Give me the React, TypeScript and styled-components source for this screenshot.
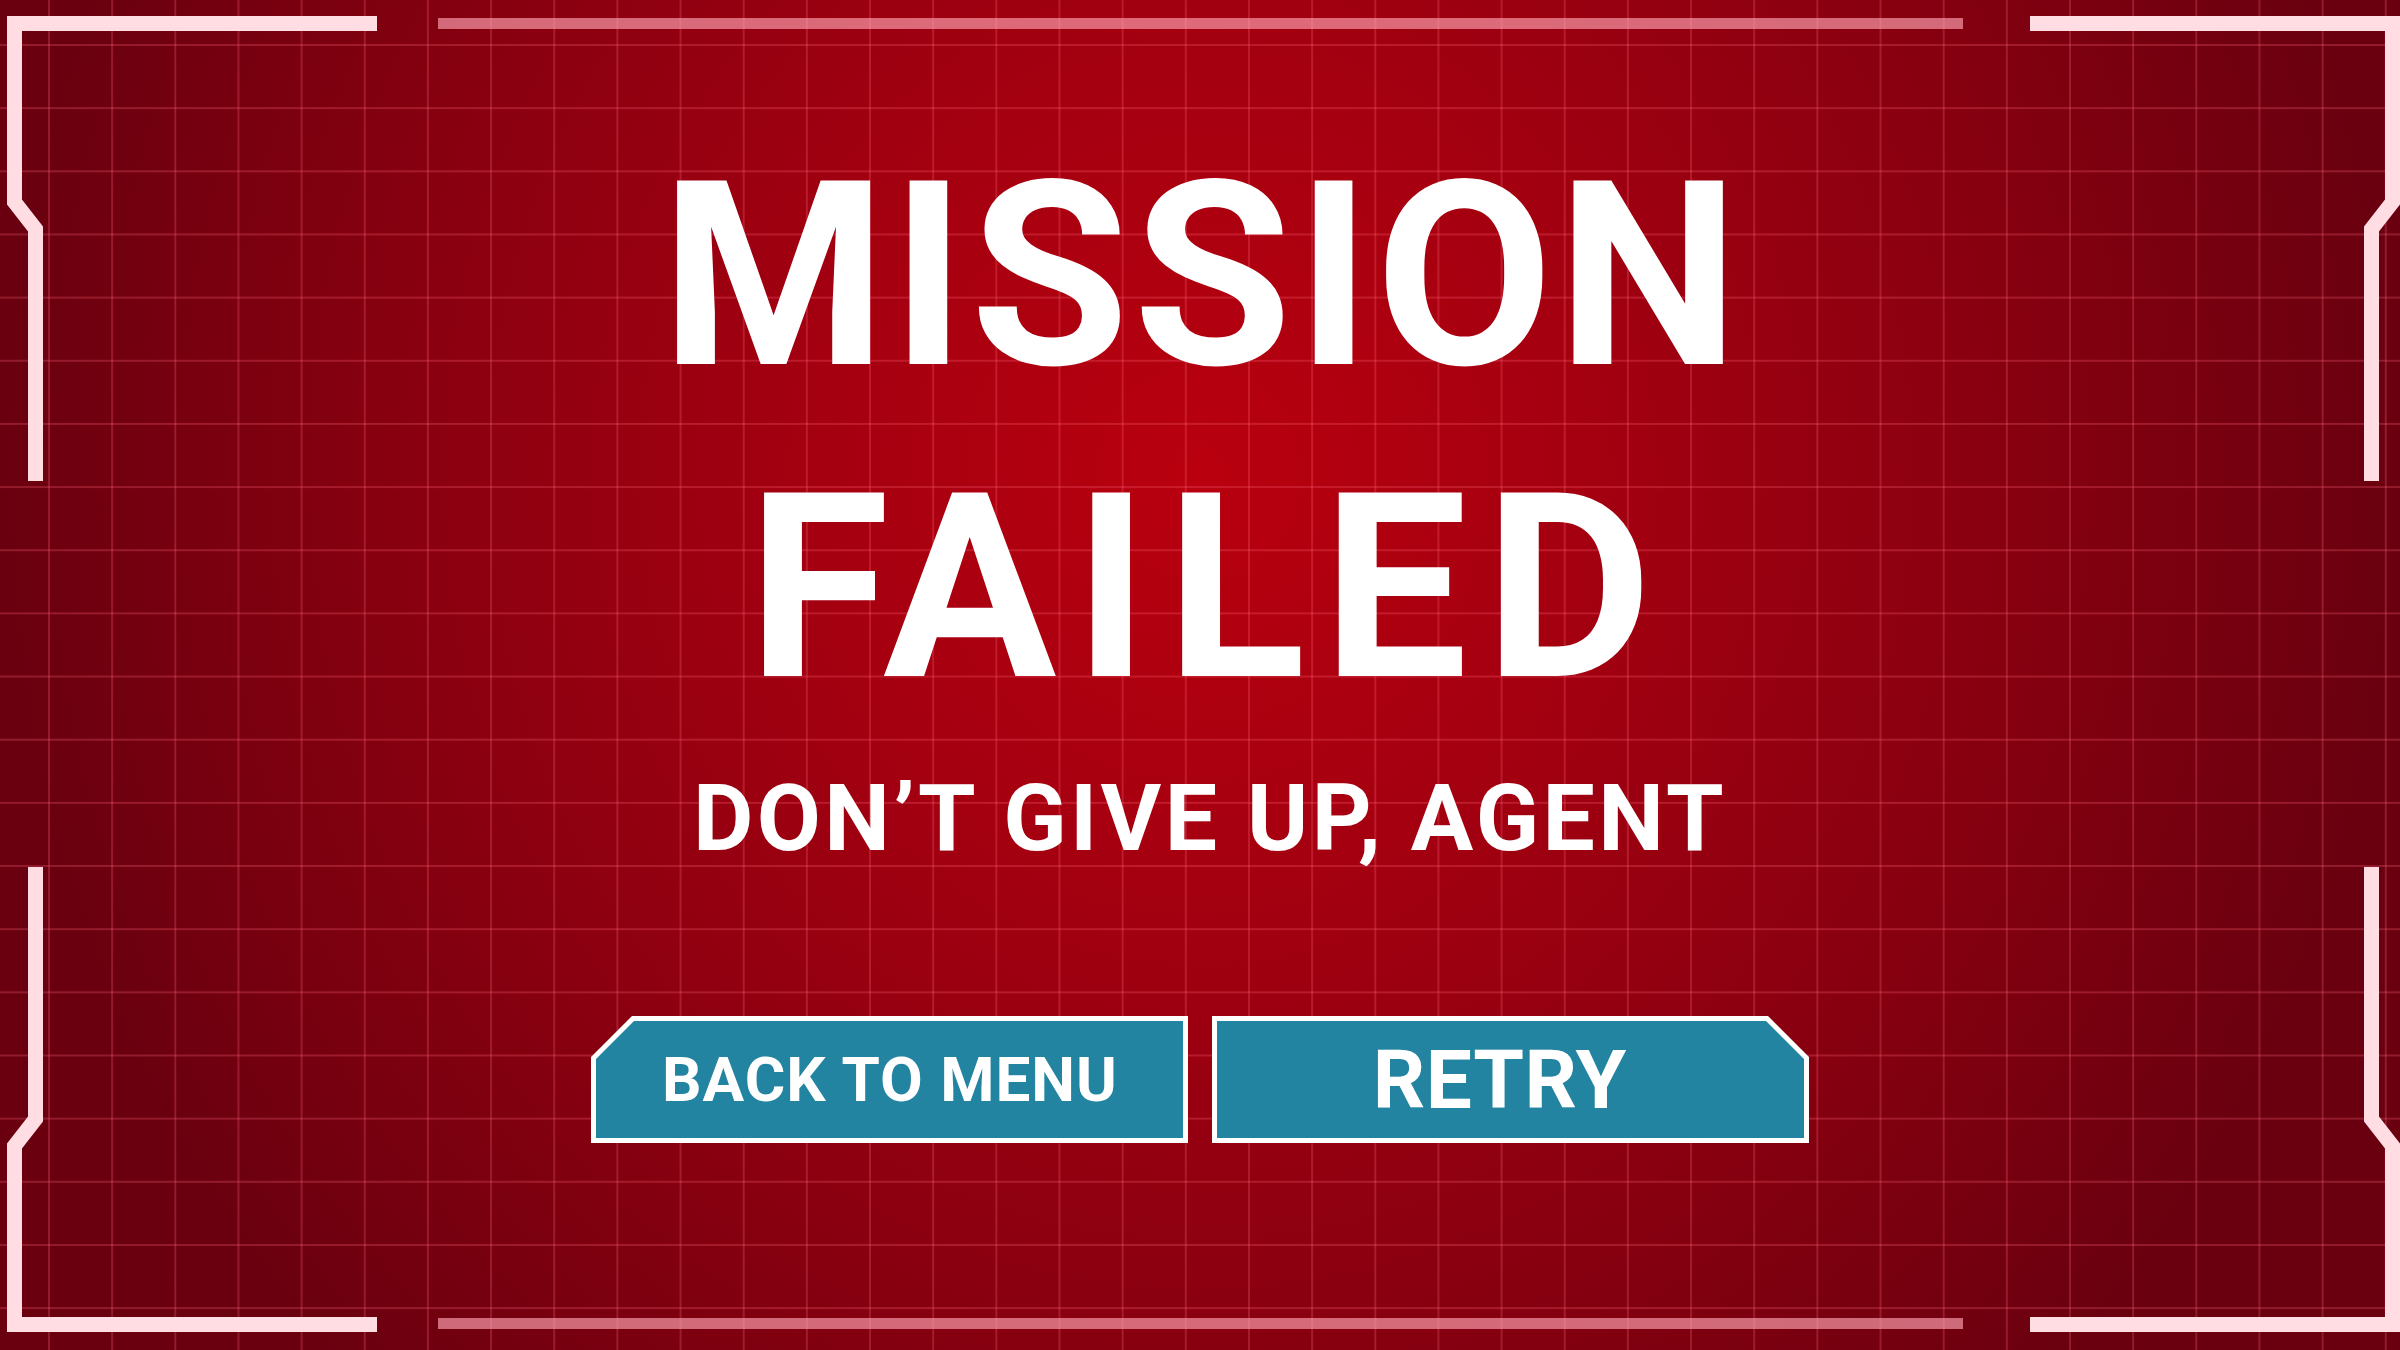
import React from 'react'
import styled, { createGlobalStyle } from 'styled-components'

const GlobalStyle = createGlobalStyle`
  html, body {
    margin: 0;
    padding: 0;
  }
  body {
    background: #6a000f;
    font-family: Roboto, "Noto Sans", "DejaVu Sans", sans-serif;
  }
`

const Screen = styled.main`
  position: relative;
  width: 100vw;
  height: 100vh;
  overflow: hidden;
  display: flex;
  flex-direction: column;
  align-items: center;
  background-color: #7a0010;
  background-image:
    linear-gradient(rgba(255, 100, 120, 0.27) 2px, transparent 2px),
    linear-gradient(90deg, rgba(255, 100, 120, 0.27) 2px, transparent 2px),
    radial-gradient(ellipse 1300px 1400px at 50% 35%, #b9000f 0%, #a40010 30%, #8a0010 60%, #6a000f 92%);
  background-size: 63.16px 63.16px, 63.16px 63.16px, 100% 100%;
  background-position: 48px 44px, 48px 44px, 0 0;
`

const Rail = styled.div<{ $bottom?: boolean }>`
  width: 1525px;
  height: 11px;
  flex-shrink: 0;
  background: rgba(255, 163, 178, 0.65);
  margin-top: ${p => (p.$bottom ? 'auto' : '18px')};
  margin-bottom: ${p => (p.$bottom ? '21px' : '0')};
`

const Title = styled.h1`
  margin: 91px 0 0;
  font-size: 258px;
  line-height: 312px;
  font-weight: 700;
  color: #fff;
  text-align: center;
  text-transform: uppercase;
`

const TitleLine = styled.span<{ $spacing: number }>`
  display: block;
  letter-spacing: ${p => p.$spacing}px;
  padding-left: ${p => p.$spacing}px;
`

const Subtitle = styled.p`
  margin: 28px 0 0;
  padding-left: 20px;
  font-size: 93px;
  line-height: 93px;
  font-weight: 700;
  letter-spacing: 3.4px;
  color: #fff;
  text-align: center;
`

const Actions = styled.div`
  display: flex;
  gap: 24px;
  margin-top: 151px;
`

const ButtonFrame = styled.button<{ $cut: 'left' | 'right' }>`
  width: 597px;
  height: 127px;
  padding: 5px;
  border: 0;
  background: #fff;
  cursor: pointer;
  clip-path: ${p =>
    p.$cut === 'left'
      ? 'polygon(41px 0, 100% 0, 100% 100%, 0 100%, 0 41px)'
      : 'polygon(0 0, calc(100% - 41px) 0, 100% 41px, 100% 100%, 0 100%)'};
`

const ButtonFace = styled.span<{ $cut: 'left' | 'right'; $size: number; $spacing: number }>`
  display: flex;
  align-items: center;
  justify-content: center;
  width: 100%;
  height: 100%;
  box-sizing: border-box;
  background: #2284a0;
  color: #fff;
  font-family: Roboto, "Noto Sans", sans-serif;
  font-weight: 700;
  font-size: ${p => p.$size}px;
  letter-spacing: ${p => p.$spacing}px;
  padding-left: ${p => p.$spacing}px;
  padding-right: ${p => (p.$cut === 'right' ? 22 : 0)}px;
  clip-path: ${p =>
    p.$cut === 'left'
      ? 'polygon(38px 0, 100% 0, 100% 100%, 0 100%, 0 38px)'
      : 'polygon(0 0, calc(100% - 38px) 0, 100% 38px, 100% 100%, 0 100%)'};
`

type Corner = 'tl' | 'tr' | 'bl' | 'br'

const BracketSvg = styled.svg<{ $corner: Corner }>`
  position: absolute;
  width: 380px;
  height: 490px;
  ${p => (p.$corner[0] === 't' ? 'top: 0;' : 'bottom: 2px;')}
  ${p => (p.$corner[1] === 'l' ? 'left: 0;' : 'right: -7px;')}
  transform: scale(${p => (p.$corner[1] === 'r' ? -1 : 1)}, ${p => (p.$corner[0] === 'b' ? -1 : 1)});
  pointer-events: none;
`

function Bracket({ corner }: { corner: Corner }) {
  return (
    <BracketSvg $corner={corner} viewBox="0 0 380 490">
      <polyline
        points="377,23.5 14.5,23.5 14.5,202 35.5,229 35.5,481"
        fill="none"
        stroke="#ffdde3"
        strokeWidth="15"
        strokeLinejoin="miter"
        strokeMiterlimit="4"
      />
    </BracketSvg>
  )
}

export default function App() {
  return (
    <>
      <GlobalStyle />
      <Screen>
        <Bracket corner="tl" />
        <Bracket corner="tr" />
        <Bracket corner="bl" />
        <Bracket corner="br" />
        <Rail />
        <Title>
          <TitleLine $spacing={4}>Mission</TitleLine>
          <TitleLine $spacing={17}>Failed</TitleLine>
        </Title>
        <Subtitle>DON’T GIVE UP, AGENT</Subtitle>
        <Actions>
          <ButtonFrame $cut="left">
            <ButtonFace $cut="left" $size={62} $spacing={1}>BACK TO MENU</ButtonFace>
          </ButtonFrame>
          <ButtonFrame $cut="right">
            <ButtonFace $cut="right" $size={82} $spacing={0.5}>RETRY</ButtonFace>
          </ButtonFrame>
        </Actions>
        <Rail $bottom />
      </Screen>
    </>
  )
}
